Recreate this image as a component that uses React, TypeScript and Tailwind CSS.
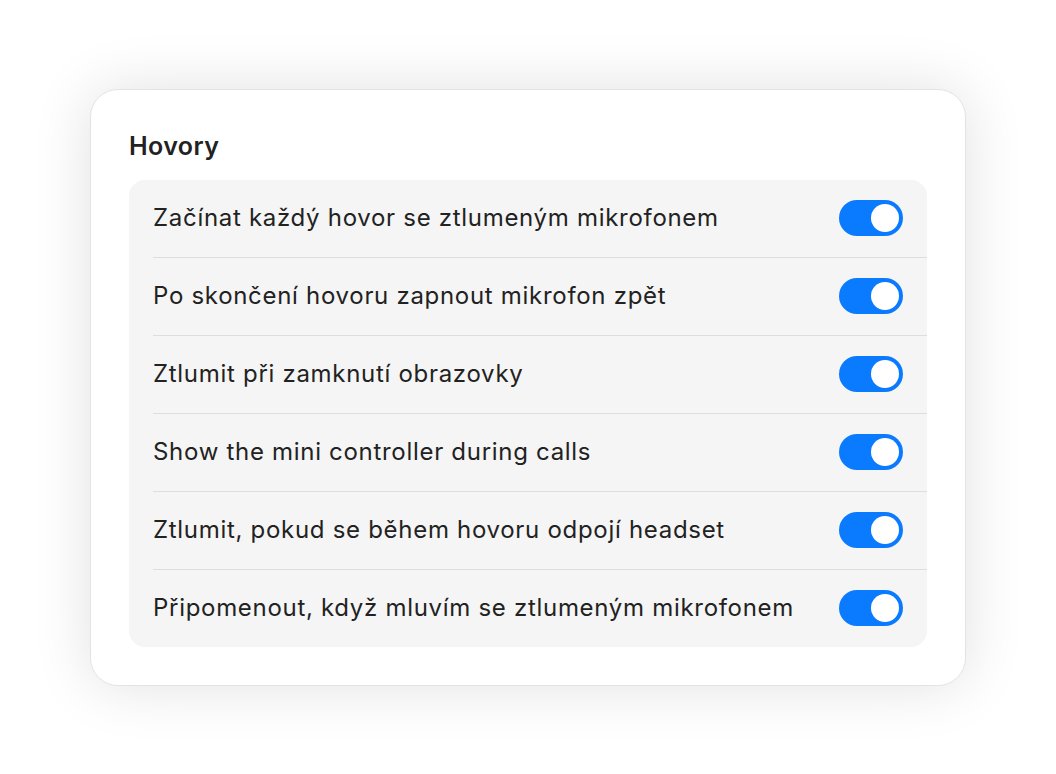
const items = [
  "Začínat každý hovor se ztlumeným mikrofonem",
  "Po skončení hovoru zapnout mikrofon zpět",
  "Ztlumit při zamknutí obrazovky",
  "Show the mini controller during calls",
  "Ztlumit, pokud se během hovoru odpojí headset",
  "Připomenout, když mluvím se ztlumeným mikrofonem",
];

function Toggle() {
  return (
    <div className="flex h-[36px] w-[64px] shrink-0 items-center justify-end rounded-full bg-[#0a7bff] pr-[4px]">
      <div className="h-[28px] w-[28px] rounded-full bg-white" />
    </div>
  );
}

export default function App() {
  return (
    <div
      className="flex min-h-screen w-full items-center justify-center bg-white"
      style={{ fontFamily: "Inter, 'Noto Sans', sans-serif" }}
    >
      <div className="w-[876px] rounded-[28px] border border-[#e3e3e3] bg-white px-[38px] pb-[38px] pt-[40px] shadow-[0_0_60px_rgba(0,0,0,0.12)]">
        <h2 className="mb-[18px] h-[32px] text-[25px] font-semibold leading-[32px] tracking-[0.4px] text-[#222]">Hovory</h2>
        <div className="rounded-[16px] bg-[#f5f5f5]">
          {items.map((label, i) => (
            <div key={label} className="pl-[24px]">
              {i > 0 && <div className="h-px bg-[#dedede]" />}
              <div className="flex h-[77px] items-center justify-between pr-[24px]">
                <span className="text-[24px] tracking-[0.7px] text-[#222]">{label}</span>
                <Toggle />
              </div>
            </div>
          ))}
        </div>
      </div>
    </div>
  );
}
